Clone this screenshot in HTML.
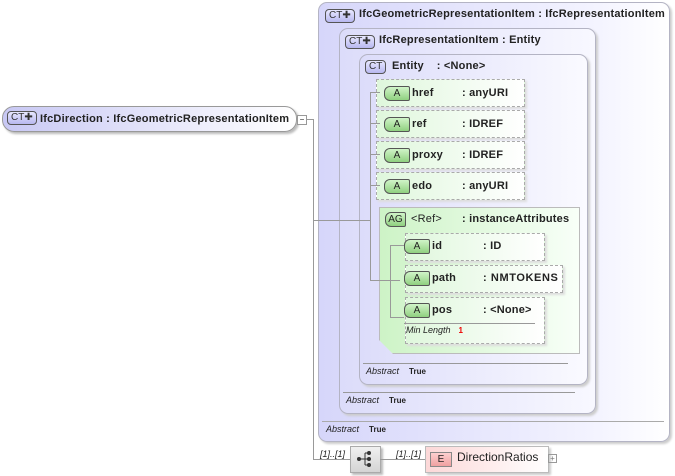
<!DOCTYPE html>
<html><head><style>
body{margin:0;width:675px;height:476px;background:#fff;position:relative;overflow:hidden;font-family:"Liberation Sans",sans-serif;font-size:11px;color:#222}
.a{position:absolute}
.box{position:absolute;border:1px solid #b4b4c4;border-radius:9px;box-shadow:2px 2px 2px #ccc}
.ct{position:absolute;height:12px;line-height:12px;border:1px solid #555;border-radius:4px;background:linear-gradient(#e8e8ff,#b8b8f0);font-size:10px;padding:0 3px;color:#333}
.t{position:absolute;font-weight:bold;white-space:nowrap;letter-spacing:.2px}
.at{position:absolute;border:1px dashed #aaa;background:linear-gradient(90deg,#dff7dc,#fff);box-shadow:2px 2px 2px #ddd}
.at2{margin-top:2px}
.atag{position:absolute;width:24px;height:13px;line-height:13px;text-align:center;border:1px solid #555;border-radius:6px 2px 2px 6px;background:linear-gradient(#d0f4c8,#90d080);font-size:10px}
.ab{position:absolute;font-size:9px;white-space:nowrap}
.ab i{margin-right:10px}
.ab b{font-size:8px}
.hl{position:absolute;height:1px;background:#999}
.vl{position:absolute;width:1px;background:#999}
</style></head><body>
<!-- outer -->
<div class="box" style="left:318px;top:2px;width:350px;height:438px;background:linear-gradient(90deg,#d6d6fa,#f4f4ff 80%,#fff)"></div>
<div class="ct" style="left:325px;top:9px">CT✚</div>
<div class="t" style="left:359px;top:8px">IfcGeometricRepresentationItem : IfcRepresentationItem</div>
<div class="hl" style="left:322px;top:421px;width:342px;background:#aaa"></div>
<div class="ab" style="left:326px;top:424px"><i>Abstract</i><b>True</b></div>
<!-- box2 -->
<div class="box" style="left:339px;top:28px;width:255px;height:384px;background:linear-gradient(90deg,#dcdcfa,#f8f8ff)"></div>
<div class="ct" style="left:345px;top:35px">CT✚</div>
<div class="t" style="left:379px;top:34px">IfcRepresentationItem : Entity</div>
<div class="hl" style="left:343px;top:392px;width:232px"></div>
<div class="ab" style="left:346px;top:395px"><i>Abstract</i><b>True</b></div>
<!-- box3 -->
<div class="box" style="left:359px;top:54px;width:227px;height:329px;background:linear-gradient(90deg,#dcdcfa,#fafaff)"></div>
<div class="ct" style="left:365px;top:60px">CT</div>
<div class="t" style="left:392px;top:60px">Entity &nbsp;&nbsp;&nbsp;: &lt;None&gt;</div>
<div class="hl" style="left:363px;top:363px;width:205px"></div>
<div class="ab" style="left:366px;top:366px"><i>Abstract</i><b>True</b></div>
<!-- attrs -->
<div class="vl" style="left:370px;top:92px;height:126px"></div>
<div class="at" style="left:376px;top:79px;width:147px;height:26px"></div><div class="atag" style="left:384px;top:86px">A</div><div class="t" style="left:412px;top:87px">href</div><div class="t" style="left:462px;top:87px">: anyURI</div>
<div class="hl" style="left:370px;top:92px;width:10px"></div>
<div class="at" style="left:376px;top:110px;width:147px;height:26px"></div><div class="atag" style="left:384px;top:117px">A</div><div class="t" style="left:412px;top:118px">ref</div><div class="t" style="left:462px;top:118px">: IDREF</div>
<div class="hl" style="left:370px;top:123px;width:10px"></div>
<div class="at" style="left:376px;top:141px;width:147px;height:26px"></div><div class="atag" style="left:384px;top:148px">A</div><div class="t" style="left:412px;top:149px">proxy</div><div class="t" style="left:462px;top:149px">: IDREF</div>
<div class="hl" style="left:370px;top:154px;width:10px"></div>
<div class="at" style="left:376px;top:172px;width:147px;height:26px"></div><div class="atag" style="left:384px;top:179px">A</div><div class="t" style="left:412px;top:180px">edo</div><div class="t" style="left:462px;top:180px">: anyURI</div>
<div class="hl" style="left:370px;top:185px;width:10px"></div>
<!-- AG -->
<div class="a" style="left:379px;top:207px;width:199px;height:145px;border:1px solid #bbb;background:linear-gradient(90deg,#cdf3c6,#f8fff8);clip-path:polygon(0 0,100% 0,100% 100%,14px 100%,0 calc(100% - 14px));box-shadow:3px 3px 0 #ccc"></div>
<div class="a" style="left:385px;top:212px;width:19px;height:13px;line-height:13px;font-size:10px;border:1px solid #555;border-radius:6px 2px 2px 6px;background:linear-gradient(#d0f4c8,#90d080);text-align:center">AG</div>
<div class="t" style="left:411px;top:213px;font-weight:normal">&lt;Ref&gt;</div><div class="t" style="left:462px;top:213px">: instanceAttributes</div>
<div class="hl" style="left:313px;top:220px;width:57px"></div>
<div class="vl" style="left:370px;top:218px;height:62px"></div>
<div class="hl" style="left:370px;top:280px;width:30px"></div>
<div class="vl" style="left:390px;top:245px;height:72px"></div>
<div class="at" style="left:405px;top:233px;width:138px;height:26px"></div><div class="atag" style="left:404px;top:239px">A</div><div class="t" style="left:432px;top:240px">id</div><div class="t" style="left:483px;top:240px">: ID</div>
<div class="hl" style="left:390px;top:245px;width:14px"></div>
<div class="at" style="left:405px;top:265px;width:156px;height:26px"></div><div class="atag" style="left:404px;top:271px">A</div><div class="t" style="left:432px;top:272px">path</div><div class="t" style="left:483px;top:272px;letter-spacing:.6px">: NMTOKENS</div>
<div class="at" style="left:405px;top:297px;width:138px;height:45px"></div><div class="atag" style="left:404px;top:303px">A</div><div class="t" style="left:432px;top:304px">pos</div><div class="t" style="left:483px;top:304px">: &lt;None&gt;</div>
<div class="hl" style="left:390px;top:317px;width:14px"></div>
<div class="hl" style="left:404px;top:323px;width:131px"></div>
<div class="ab" style="left:406px;top:325px"><i style="margin-right:8px">Min Length</i><b style="color:#e00">1</b></div>
<!-- main node -->
<div class="a" style="left:2px;top:106px;width:293px;height:24px;border:1px solid #999;border-radius:12px;background:linear-gradient(90deg,#c8c8f4,#fff);box-shadow:2px 2px 2px #bbb"></div>
<div class="ct" style="left:7px;top:111px">CT✚</div>
<div class="t" style="left:40px;top:113px">IfcDirection : IfcGeometricRepresentationItem</div>
<div class="a" style="left:297px;top:115px;width:8px;height:8px;border:1px solid #999;background:#fff;font-size:8px;line-height:7px;text-align:center">−</div>
<div class="hl" style="left:306px;top:119px;width:7px"></div>
<div class="vl" style="left:313px;top:119px;height:340px"></div>
<!-- bottom -->
<div class="hl" style="left:313px;top:459px;width:37px"></div>
<div class="a" style="left:320px;top:449px;font-size:9px;font-style:italic">[1]..[1]</div>
<div class="a" style="left:350px;top:446px;width:29px;height:25px;border:1px solid #aaa;background:linear-gradient(#f0f0f0,#d4d4d4);box-shadow:2px 2px 2px #bbb"></div>
<svg class="a" style="left:355px;top:450px" width="20" height="18"><circle cx="4" cy="9" r="2" fill="#333"/><path d="M4 9H10M10 3V15M10 3H14M10 9H14M10 15H14" stroke="#333" fill="none"/><circle cx="14" cy="3" r="2" fill="#333"/><circle cx="14" cy="9" r="2" fill="#333"/><circle cx="14" cy="15" r="2" fill="#333"/></svg>
<div class="hl" style="left:380px;top:459px;width:45px"></div>
<div class="a" style="left:396px;top:449px;font-size:9px;font-style:italic">[1]..[1]</div>
<div class="a" style="left:425px;top:446px;width:122px;height:25px;border:1px solid #bbb;background:linear-gradient(90deg,#fcd8d8,#fff);box-shadow:2px 2px 2px #ccc"></div>
<div class="a" style="left:430px;top:452px;width:20px;height:13px;line-height:13px;text-align:center;font-size:10px;border:1px solid #888;background:linear-gradient(#fcd0d0,#f0a0a0)">E</div>
<div class="a" style="left:457px;top:450px;font-size:12px">DirectionRatios</div>
<div class="a" style="left:548px;top:454px;width:7px;height:7px;border:1px solid #999;font-size:8px;line-height:7px;text-align:center;color:#777">+</div>
</body></html>
